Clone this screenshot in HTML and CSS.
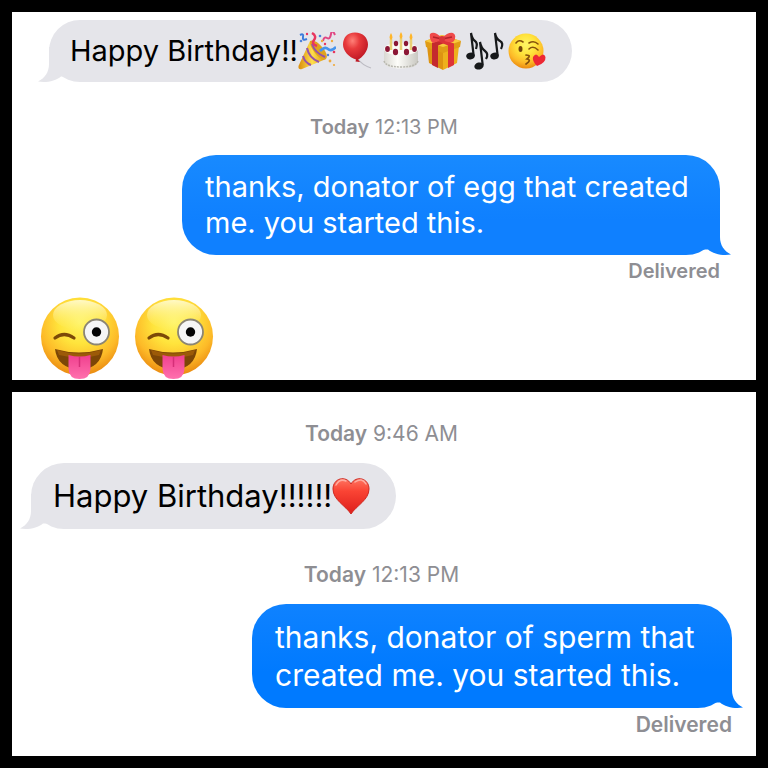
FILE: index.html
```html
<!DOCTYPE html>
<html lang="en">
<head>
    <meta charset="UTF-8">
    <meta name="viewport" content="width=device-width, initial-scale=1.0">
    <title>Messages</title>
    <link rel="stylesheet" href="styles.css">
</head>
<body>
    <!-- Shared emoji and bubble tail shapes -->
    <svg class="sprites" aria-hidden="true">
        <defs>
            <radialGradient id="face" cx="50%" cy="32%" r="68%">
                <stop offset="0" stop-color="#fff466"/>
                <stop offset="0.4" stop-color="#ffe43c"/>
                <stop offset="0.75" stop-color="#fdba28"/>
                <stop offset="1" stop-color="#ea8a10"/>
            </radialGradient>
            <linearGradient id="shine" x1="0" y1="0" x2="0" y2="1">
                <stop offset="0" stop-color="#fffde0" stop-opacity="0.85"/>
                <stop offset="1" stop-color="#fff37a" stop-opacity="0"/>
            </linearGradient>
            <linearGradient id="tongue" x1="0" y1="0" x2="0" y2="1">
                <stop offset="0" stop-color="#f0408e"/>
                <stop offset="1" stop-color="#ff70ae"/>
            </linearGradient>
            <radialGradient id="balloonRed" cx="38%" cy="28%" r="70%">
                <stop offset="0" stop-color="#ff8078"/>
                <stop offset="0.4" stop-color="#e83a3c"/>
                <stop offset="1" stop-color="#bd1724"/>
            </radialGradient>
            <linearGradient id="heartRed" x1="0" y1="0" x2="0" y2="1">
                <stop offset="0" stop-color="#ff7561"/>
                <stop offset="0.35" stop-color="#fa4434"/>
                <stop offset="1" stop-color="#dd1e1b"/>
            </linearGradient>
            <linearGradient id="gold" x1="0" y1="0" x2="1" y2="0">
                <stop offset="0" stop-color="#d98d0c"/>
                <stop offset="0.5" stop-color="#ffdf4d"/>
                <stop offset="1" stop-color="#d9910f"/>
            </linearGradient>
            <linearGradient id="icing" x1="0" y1="0" x2="1" y2="0">
                <stop offset="0" stop-color="#d9d8d2"/>
                <stop offset="0.4" stop-color="#fdfdf9"/>
                <stop offset="1" stop-color="#c9c8c2"/>
            </linearGradient>
        </defs>

        <symbol id="tail" viewBox="0 0 30 35">
            <path d="M11 0V17C11 25 7 31 0 34.500C8 36 18 34 23 29.500H30V0Z"/>
        </symbol>

        <symbol id="wink" viewBox="0 0 80 82">
            <circle cx="40" cy="39.500" r="39" fill="url(#face)"/>
            <ellipse cx="40" cy="18" rx="27" ry="15" fill="url(#shine)"/>
            <path d="M15 41Q24 34 34 41" fill="none" stroke="#7c4a08" stroke-width="3.200" stroke-linecap="round"/>
            <path d="M15 52Q39 59 63 52Q61 71 40 73Q17 71 15 52Z" fill="#7d4606"/>
            <path d="M17 53Q39 60 61 53L59 58Q40 63 19 58Z" fill="#9c5a08"/>
            <path d="M28.500 58Q39.500 61 50.500 58V72Q50 82 39.500 82Q29 82 28.500 72Z" fill="url(#tongue)"/>
            <path d="M39.500 60V70" stroke="#d52f78" stroke-width="1.500"/>
            <circle cx="56.500" cy="35" r="12.500" fill="#f6f6f6" stroke="#8b8574" stroke-width="1.800"/>
            <circle cx="56.500" cy="35" r="4.700" fill="#050505"/>
        </symbol>

        <symbol id="popper" viewBox="0 0 38 38">
            <path d="M12 9L0.500 34Q0 38 4 37L28 27Z" fill="url(#gold)"/>
            <path d="M12 9Q17 7 24 15T28 27Q23 29 17 21T12 9Z" fill="#dfa41f"/>
            <path d="M9 16Q11 26 21 30M5 24Q7 31 13 33M14 12Q17 21 27 25" fill="none" stroke="#9653a8" stroke-width="2"/>
            <path d="M2 3Q6 1 5 5T9 7" fill="none" stroke="#3b7bdc" stroke-width="2"/>
            <path d="M14 1Q19 4 16 8T19 14" fill="none" stroke="#e8365f" stroke-width="2.500"/>
            <path d="M25 9Q26 4 29 6T33 2T37 3" fill="none" stroke="#e04683" stroke-width="2"/>
            <path d="M22 19Q27 14 30 17T38 15" fill="none" stroke="#4794ec" stroke-width="2.500"/>
            <g fill="#4d82dc">
                <circle cx="3" cy="9" r="1.300"/>
                <circle cx="22" cy="4" r="1.300"/>
                <circle cx="30" cy="23" r="1.200"/>
            </g>
            <g fill="#e8365f">
                <circle cx="9" cy="2" r="1.200"/>
                <circle cx="27" cy="12" r="1.200"/>
                <circle cx="36" cy="20" r="1.300"/>
            </g>
            <g fill="#efaa3c">
                <circle cx="24" cy="9" r="1.200"/>
                <circle cx="34" cy="9" r="1.200"/>
                <circle cx="32" cy="29" r="1.400"/>
                <circle cx="36" cy="33" r="1.100"/>
            </g>
        </symbol>

        <symbol id="balloon" viewBox="0 0 38 38">
            <path d="M18 27Q22 33 31 36" fill="none" stroke="#bdbcc3" stroke-width="1.200"/>
            <path d="M15 0.500C23 0.500 28 6 28 12.500C28 19 22 26 18 27.500L20 30L15.500 29.500L16 27.500C9 25.500 3 19 3 12.500C3 6 7 0.500 15 0.500Z" fill="url(#balloonRed)"/>
        </symbol>

        <symbol id="cake" viewBox="0 0 38 38">
            <path d="M2 17V30Q4 36.500 19 36.500T36 30V17Z" fill="url(#icing)"/>
            <ellipse cx="19" cy="17" rx="17" ry="6.500" fill="#fbfaf5"/>
            <path d="M2 29Q4 35 19 35T36 29" fill="none" stroke="#b9b8b0" stroke-width="1.500" stroke-dasharray="2 1"/>
            <g fill="#8c1735">
                <ellipse cx="14" cy="11.500" rx="2.200" ry="2.800"/>
                <ellipse cx="24" cy="11.500" rx="2.200" ry="2.800"/>
            </g>
            <g stroke="#e9cf76" stroke-width="2.500">
                <path d="M9 7V18M19 6V18M29 7V18"/>
            </g>
            <g fill="#ffb62b">
                <path d="M9 1Q12 6 9 8Q6 6 9 1M19 0Q22 5 19 7Q16 5 19 0M29 1Q32 6 29 8Q26 6 29 1"/>
            </g>
            <g fill="#8c1735">
                <ellipse cx="5.500" cy="17" rx="2.400" ry="3"/>
                <ellipse cx="13.500" cy="20" rx="2.600" ry="3.200"/>
                <ellipse cx="24.500" cy="20" rx="2.600" ry="3.200"/>
                <ellipse cx="32.500" cy="17" rx="2.400" ry="3"/>
            </g>
        </symbol>

        <symbol id="gift" viewBox="0 0 38 38">
            <path d="M3 14L19 19V38L5 31Z" fill="#dd9312"/>
            <path d="M19 19L35 14L33 31L19 38Z" fill="#eeb01d"/>
            <path d="M1 9L18 3L37 9L36 15L19 21L2 15Z" fill="#e09c16"/>
            <path d="M1 9L18 3L37 9L19 15Z" fill="#f8c93d"/>
            <path d="M8 11L25 5L31 7L14 13.500ZM14 13.500L8 11V33L14 36Z" fill="#c4292e"/>
            <path d="M24 13.500L30 11.500V33L24 36ZM24 13.500L8 7L13 5L30 11.500Z" fill="#dd3337"/>
            <path d="M18 6Q10 -2 6 2Q5 8 9 11L18 8Q28 12 30 9Q33 3 29 1Q24 0 18 6Z" fill="#ef4a4b"/>
            <path d="M18 7L9 5M18 7L28 5" stroke="#b4232b" stroke-width="1.500"/>
            <circle cx="18" cy="7" r="3" fill="#d8343a"/>
        </symbol>

        <symbol id="notes" viewBox="0 0 38 38">
            <g fill="#17191b">
                <ellipse cx="4.500" cy="24" rx="4.300" ry="3.400" transform="rotate(-15 4.500 24)"/>
                <ellipse cx="13" cy="34" rx="4.700" ry="3.500" transform="rotate(-15 13 34)"/>
                <ellipse cx="28.500" cy="24" rx="4.300" ry="3.400" transform="rotate(-15 28.500 24)"/>
            </g>
            <g fill="none" stroke="#17191b" stroke-width="2.200">
                <path d="M7.700 24L5 1Q6 7 9 9T10 17"/>
                <path d="M16.700 33L14 10Q15 16 19 19T20 27"/>
                <path d="M31.700 24L29 1Q30 7 34 9T35 17"/>
            </g>
        </symbol>

        <symbol id="kiss" viewBox="0 0 38 38">
            <circle cx="18" cy="19" r="17.500" fill="url(#face)"/>
            <ellipse cx="12.500" cy="17" rx="2" ry="3" fill="#72430a"/>
            <path d="M8 11Q11 7 15 10M21 11Q26 8 30 12M21 17Q25 13 30 18" fill="none" stroke="#86510c" stroke-width="1.600" stroke-linecap="round"/>
            <path d="M18 23Q24 23 19 27Q24 28 18 32" fill="none" stroke="#86510c" stroke-width="1.700" stroke-linecap="round"/>
            <path d="M29 34Q24 29 25 25Q28 20 31 25Q36 20 37.500 25Q38 31 29 34Z" fill="#ed2834"/>
        </symbol>

        <symbol id="heart" viewBox="0 0 38 38">
            <path d="M19 37C14 29 1 23 1 12C1 1 14 -2 19 7C24 -2 37 1 37 12C37 23 24 29 19 37Z" fill="url(#heartRed)" stroke="#cf2820"/>
            <path d="M4 8Q8 1 14 4M23 5Q30 0 34 7" fill="none" stroke="#ffaca0" stroke-width="1.500" stroke-linecap="round"/>
        </symbol>
    </svg>

    <main class="chats">
        <section class="chat chat-mom">
            <div class="bubble received">
                <svg class="tail" aria-hidden="true"><use href="#tail"/></svg>
                <span>Happy Birthday!!</span>
                <span class="emojis">
                    <svg class="emoji" role="img" aria-label="party popper"><use href="#popper"/></svg>
                    <svg class="emoji" role="img" aria-label="balloon"><use href="#balloon"/></svg>
                    <svg class="emoji" role="img" aria-label="birthday cake"><use href="#cake"/></svg>
                    <svg class="emoji" role="img" aria-label="gift"><use href="#gift"/></svg>
                    <svg class="emoji" role="img" aria-label="musical notes"><use href="#notes"/></svg>
                    <svg class="emoji" role="img" aria-label="blowing a kiss"><use href="#kiss"/></svg>
                </span>
            </div>
            <p class="timestamp"><strong>Today</strong> 12:13 PM</p>
            <div class="bubble sent">
                <svg class="tail" aria-hidden="true"><use href="#tail"/></svg>
                thanks, donator of egg that created me. you started this.
            </div>
            <p class="status">Delivered</p>
            <div class="big-emojis">
                <svg class="big-emoji" role="img" aria-label="winking face with tongue"><use href="#wink"/></svg>
                <svg class="big-emoji" role="img" aria-label="winking face with tongue"><use href="#wink"/></svg>
            </div>
        </section>

        <section class="chat chat-dad">
            <p class="timestamp"><strong>Today</strong> 9:46 AM</p>
            <div class="bubble received">
                <svg class="tail" aria-hidden="true"><use href="#tail"/></svg>
                <span>Happy Birthday!!!!!!</span>
                <span class="emojis">
                    <svg class="emoji" role="img" aria-label="heart"><use href="#heart"/></svg>
                </span>
            </div>
            <p class="timestamp"><strong>Today</strong> 12:13 PM</p>
            <div class="bubble sent">
                <svg class="tail" aria-hidden="true"><use href="#tail"/></svg>
                thanks, donator of sperm that created me. you started this.
            </div>
            <p class="status">Delivered</p>
        </section>
    </main>
</body>
</html>
```

FILE: styles.css
```css
* {
    margin: 0;
    padding: 0;
    box-sizing: border-box;
}

body {
    background: #000;
    font-family: Inter, "Liberation Sans", sans-serif;
}

.sprites {
    position: absolute;
    width: 0;
    height: 0;
}

.chats {
    display: flex;
    flex-direction: column;
    gap: 12px;
    min-height: 100vh;
    padding: 12px;
}

.chat {
    display: flex;
    flex-direction: column;
    background: #fff;
}

.chat-mom {
    padding: 8px 36px 1px;
}

.chat-dad {
    flex: 1;
    padding: 30px 24px 18px 19px;
}

.bubble {
    position: relative;
    border-radius: 34px;
}

.received {
    display: flex;
    align-items: center;
    align-self: flex-start;
    background: #e5e5ea;
    color: #000;
    padding: 12px 26px 12px 21px;
    line-height: 38px;
}

.sent {
    align-self: flex-end;
    max-width: 538px;
    padding: 14px 23px;
    color: #fff;
    line-height: 36px;
}

.chat-mom .bubble {
    font-size: 29px;
}

.chat-mom .received {
    margin-left: 1px;
}

.chat-mom .sent {
    background: linear-gradient(#188aff, #0f80ff 65%);
}

.chat-dad .received {
    padding: 14px 26px 14px 22px;
    font-size: 31px;
}

.chat-dad .sent {
    max-width: 480px;
    font-size: 30px;
    line-height: 38px;
    background: linear-gradient(#0f82ff, #007aff 65%);
}

.tail {
    position: absolute;
    bottom: 0;
    left: -11px;
    width: 30px;
    height: 35px;
    fill: #e5e5ea;
}

.sent .tail {
    left: auto;
    right: -11px;
    transform: scaleX(-1);
    fill: #0f80ff;
}

.chat-dad .sent .tail {
    fill: #007aff;
}

.emojis {
    display: flex;
    gap: 4px;
}

.emoji {
    width: 38px;
    height: 38px;
}

.timestamp {
    margin: 33px 0 16px;
    color: #8e8e93;
    font-size: 20px;
    line-height: 24px;
    text-align: center;
}

.chat-dad .timestamp {
    margin: 34px 0 17px;
    font-size: 21px;
}

.chat-dad .timestamp:first-child {
    margin-top: 0;
}

.timestamp strong {
    font-weight: 600;
}

.status {
    margin-top: 4px;
    color: #8e8e93;
    font-size: 20px;
    font-weight: 600;
    line-height: 24px;
    text-align: right;
}

.chat-dad .status {
    margin-top: 5px;
    font-size: 21px;
}

.big-emojis {
    display: flex;
    gap: 14px;
    margin: 14px 0 0 -8px;
}

.big-emoji {
    width: 80px;
    height: 82px;
}
```
